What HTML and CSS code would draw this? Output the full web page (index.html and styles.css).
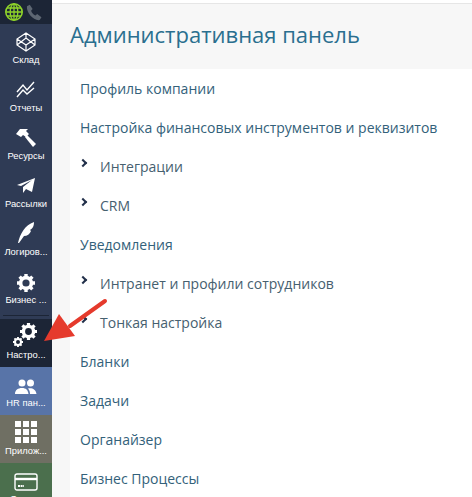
FILE: index.html
```html
<!DOCTYPE html>
<html>

<head>
    <meta charset="utf-8">
    <title>Административная панель</title>
    <link rel="stylesheet" href="styles.css">
</head>

<body>
    <div class="wrapper">
        <div class="side">
            <div class="status">
                <svg class="globe" viewBox="0 0 18 18" width="18" height="18">
                    <circle cx="9" cy="9" r="8.2" fill="#1c2536" stroke="#8fd42a" stroke-width="1.6"/>
                    <ellipse cx="9" cy="9" rx="3.8" ry="8.2" fill="none" stroke="#8fd42a" stroke-width="1.3"/>
                    <path d="M9 1v16M1 9h16M2 5h14M2 13h14" fill="none" stroke="#8fd42a" stroke-width="1.3"/>
                </svg>
                <svg class="phone" viewBox="0 0 18 18" width="17" height="17">
                    <path d="M1 2.5 4 .8l3 4.6-1.600 1.700c.6 2.200 2.400 4 4.600 5l1.800-1.500 4.600 3.300-1.900 3.100C8 18 .2 9.500 1 2.500z" fill="#5d6672"/>
                </svg>
            </div>
            <a class="item">
                <svg viewBox="0 0 20 20" width="20" height="20" fill="none" stroke="#fff" stroke-width="1.200">
                    <path d="M10 1 19 7v6l-9 6-9-6V7zM1 7l9 6 9-6M10 1v5M10 19v-6M1 13l9-7 9 7"/>
                </svg>
                <span>Склад</span>
            </a>
            <a class="item">
                <svg viewBox="0 0 20 20" width="20" height="20" fill="none" stroke="#fff" stroke-width="1.400">
                    <path d="M1 12 7 5l4 5 7-8M1 17l6-7 4 4 7-6"/>
                </svg>
                <span>Отчеты</span>
            </a>
            <a class="item">
                <svg viewBox="0 0 22 20" width="22" height="20" fill="#fff">
                    <path d="M1 6 5 1h8l-2 2 3 3-3 3-3-2-2 2z"/>
                    <path d="M10 9l2-2 9 9-3 3z"/>
                </svg>
                <span>Ресурсы</span>
            </a>
            <a class="item">
                <svg viewBox="0 0 20 20" width="20" height="20" fill="#fff">
                    <path d="M1 9 19 2l-3 14-6-3-3 4v-6l9-7-11 6z"/>
                </svg>
                <span>Рассылки</span>
            </a>
            <a class="item">
                <svg viewBox="0 0 20 22" width="20" height="22" fill="#fff">
                    <path d="M2 21C4 12 9 3 18 0c0 5-2 7-4 8l1 1c-1 3-4 5-7 5l-5 7z"/>
                </svg>
                <span>Логиров...</span>
            </a>
            <a class="item">
                <svg viewBox="0 0 20 20" width="18" height="18">
                    <use href="#gear"/>
                </svg>
                <span>Бизнес ...</span>
            </a>
            <div class="line"></div>
            <a class="item dark">
                <svg viewBox="0 0 26 24" width="26" height="24">
                    <use href="#gear" transform="translate(7 0) scale(.85)"/>
                    <use href="#gear" transform="translate(0 14) scale(.5)"/>
                </svg>
                <span>Настро...</span>
            </a>
            <a class="item blue">
                <svg viewBox="0 0 22 16" width="22" height="16" fill="#fff">
                    <circle cx="7" cy="4" r="3.500"/>
                    <circle cx="15.500" cy="4" r="3.500"/>
                    <path d="M0 15c0-4 3-6 7-6s6 2 6.500 6zM15 15c0-2-.5-4-2-5.500 4-1 8 1 8.500 5.500z"/>
                </svg>
                <span>HR пан...</span>
            </a>
            <a class="item olive">
                <svg viewBox="0 0 22 22" width="22" height="22" fill="#fff">
                    <path d="M0 0h6v6H0zM8 0h6v6H8zM16 0h6v6h-6zM0 8h6v6H0zM8 8h6v6H8zM16 8h6v6h-6zM0 16h6v6H0zM8 16h6v6H8zM16 16h6v6h-6z"/>
                </svg>
                <span>Прилож...</span>
            </a>
            <a class="item green">
                <svg viewBox="0 0 24 18" width="24" height="18" fill="none" stroke="#fff" stroke-width="1.400">
                    <rect x="1" y="1" width="22" height="16" rx="2"/>
                    <path d="M1 6h22" stroke-width="2.400"/>
                    <path d="M4 13h6" stroke-width="2" stroke-dasharray="2 .6"/>
                </svg>
                <span>Оплата</span>
            </a>
        </div>

        <div class="main">
            <h1 class="title">Административная панель</h1>
            <ul class="card">
                <li>Профиль компании</li>
                <li>Настройка финансовых инструментов и реквизитов</li>
                <li class="sub">Интеграции</li>
                <li class="sub">CRM</li>
                <li>Уведомления</li>
                <li class="sub">Интранет и профили сотрудников</li>
                <li class="sub">Тонкая настройка</li>
                <li>Бланки</li>
                <li>Задачи</li>
                <li>Органайзер</li>
                <li>Бизнес Процессы</li>
            </ul>
        </div>
    </div>

    <svg class="defs" width="0" height="0">
        <defs>
            <g id="gear">
                <circle cx="10" cy="10" r="6" fill="none" stroke="#fff" stroke-width="4"/>
                <path d="M10 0v4M10 16v4M0 10h4M16 10h4M2.900 2.900l2.900 2.900M14.200 14.200l2.900 2.900M2.900 17.100l2.900-2.900M14.200 5.800l2.900-2.900" stroke="#fff" stroke-width="3.800"/>
            </g>
        </defs>
    </svg>

    <svg class="arrow" viewBox="0 0 70 50" width="70" height="50">
        <path d="M65 3 30 28" stroke="#e53a2c" stroke-width="4" stroke-linecap="round" fill="none"/>
        <path d="M19 16 35 38 4 43z" fill="#e53a2c"/>
    </svg>
</body>

</html>
```

FILE: styles.css
```css
* {
    margin: 0;
    padding: 0;
    box-sizing: border-box;
}

body {
    overflow: hidden;
    height: 497px;
    position: relative;
    font-family: "Open Sans", sans-serif;
}

.wrapper {
    display: flex;
    width: 472px;
    height: 497px;
    overflow: hidden;
}

.side {
    width: 52px;
    flex: none;
    background: #2f3b55;
    color: #ffffff;
    font-family: "Liberation Sans", Arial, sans-serif;
}

.status {
    height: 24px;
    display: flex;
    align-items: center;
    gap: 3px;
    padding-left: 5px;
    background: #1c2536;
}

.item {
    height: 48px;
    display: flex;
    flex-direction: column;
    align-items: center;
    justify-content: flex-end;
    gap: 2px;
    padding-bottom: 6px;
    font-size: 9.4px;
    line-height: 12px;
    white-space: nowrap;
}

.line {
    height: 1px;
    margin: 3px 3px 3px;
    background: #1c2536;
}

.dark {
    background: #1c2536;
}

.blue {
    background: #5874a8;
}

.olive {
    background: #6f6f63;
}

.green {
    background: #4b6f4d;
}

.main {
    flex: 1;
    background: #f7f7f7;
    border-top: 3px solid #ffffff;
    box-shadow: inset 0 1px 0 #e6e6e6;
    padding-left: 18px;
}

.title {
    height: 66px;
    padding-top: 16px;
    font-size: 22px;
    line-height: 30px;
    font-weight: 400;
    color: #2a6f8f;
}

.card {
    list-style: none;
    background: #ffffff;
    padding: 0 10px;
    height: 430px;
}

.card li {
    height: 39px;
    line-height: 39px;
    font-size: 14px;
    color: #33617a;
}

.card .sub {
    position: relative;
    padding-left: 20px;
    color: #46606f;
}

.card .sub::before {
    content: "";
    position: absolute;
    left: 0;
    top: 13px;
    width: 4px;
    height: 4px;
    border-top: 2px solid #22304a;
    border-right: 2px solid #22304a;
    transform: rotate(45deg);
}

.defs {
    position: absolute;
}

.arrow {
    position: absolute;
    left: 40px;
    top: 298px;
}
```
